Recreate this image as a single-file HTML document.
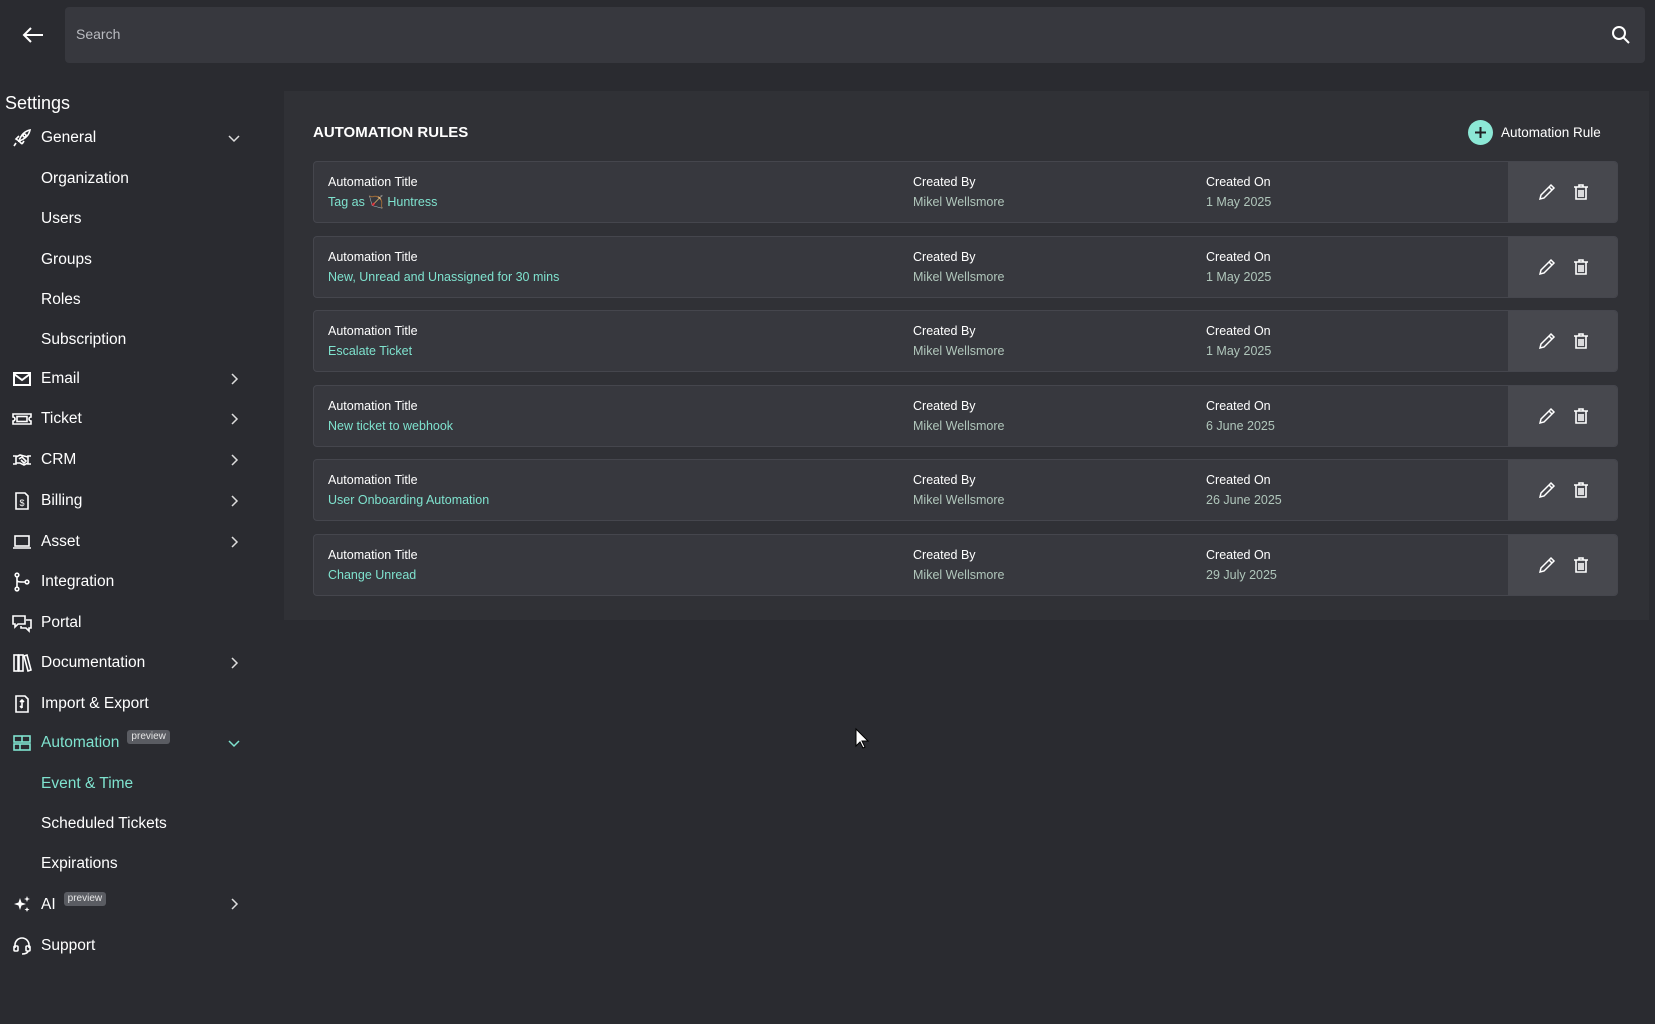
<!DOCTYPE html>
<html><head><meta charset="utf-8"><style>
*{margin:0;padding:0;box-sizing:border-box}
body{width:1655px;height:1024px;background:#2a2b30;font-family:"Liberation Sans",sans-serif;color:#fff;position:relative;overflow:hidden}
.abs{position:absolute}
.search{left:65px;top:7px;width:1580px;height:56px;background:#37383e;border-radius:4px}
.search span{position:absolute;left:11px;top:19px;font-size:14px;color:#b9bbc0}
.sb{position:absolute;left:0;top:2px;width:280px;height:1000px}
.nav{position:absolute;left:41px;font-size:15.5px;color:#fff;line-height:20px}
.ico{position:absolute;left:12px;width:20px;height:20px}
.chev{position:absolute;left:228px;width:12px;height:12px}
.teal{color:#7fe3cf}
.badge{display:inline-block;background:#5a5c62;color:#e6e6e6;font-size:10px;line-height:14px;padding:0 4px;border-radius:3px;vertical-align:top;margin-left:8px;margin-top:-3px}
.panel{left:284px;top:91px;width:1365px;height:529px;background:#303136}
.card{position:absolute;left:313px;width:1305px;height:62px;background:#37383e;border:1px solid #45464d;border-radius:4px;overflow:hidden}
.card .act{position:absolute;right:0;top:0;width:109px;height:100%;background:#47484e}
.card .l{position:absolute;font-size:12.5px;line-height:16px}
.card .h{top:12px;color:#fff}
.card .v{top:32px}
.v1{color:#7fe3cf}.v2{color:#b0c6bb}
</style></head><body>
<svg class="abs" style="left:21px;top:25px" width="24" height="20" viewBox="0 0 24 20"><path d="M22 10H3M10 3L3 10l7 7" stroke="#fff" stroke-width="2" fill="none"/></svg>
<div class="abs search"><span>Search</span>
<svg style="position:absolute;right:14px;top:18px" width="20" height="20" viewBox="0 0 20 20"><circle cx="8" cy="8" r="6" stroke="#fff" stroke-width="2" fill="none"/><path d="M12.5 12.5L18 18" stroke="#fff" stroke-width="2"/></svg></div>

<div class="sb">
<div class="abs" style="left:5px;top:91px;font-size:18px">Settings</div>

<svg class="ico" style="top:126px" viewBox="0 0 20 20" fill="none" stroke="#fff" stroke-width="1.6"><path d="M7 13c2-6 6-10 11-11-1 5-5 9-11 11zM7 13l-3-2 3-3M10 16l-3-3M10 16l2-3"/><circle cx="12.5" cy="7.5" r="1.5"/><path d="M4 15l-2 3"/></svg>
<div class="nav" style="top:126px">General</div>
<svg class="chev" style="top:130px" viewBox="0 0 12 12"><path d="M1 4l5 5 5-5" stroke="#ddd" stroke-width="1.5" fill="none"/></svg>
<div class="nav" style="top:167px">Organization</div>
<div class="nav" style="top:207px">Users</div>
<div class="nav" style="top:248px">Groups</div>
<div class="nav" style="top:288px">Roles</div>
<div class="nav" style="top:328px">Subscription</div>

<svg class="ico" style="top:367px" viewBox="0 0 20 20" fill="none" stroke="#fff" stroke-width="2"><rect x="2" y="4" width="16" height="12"/><path d="M2 5l8 6 8-6"/></svg>
<div class="nav" style="top:367px">Email</div>
<svg class="chev" style="top:371px" viewBox="0 0 12 12"><path d="M4 1l5 5-5 5" stroke="#ddd" stroke-width="1.5" fill="none"/></svg>

<svg class="ico" style="top:407px" viewBox="0 0 20 20" fill="none" stroke="#fff" stroke-width="1.6"><path d="M1 5h18v3a2 2 0 000 4v3H1v-3a2 2 0 000-4z"/><rect x="5" y="7.5" width="10" height="5"/></svg>
<div class="nav" style="top:407px">Ticket</div>
<svg class="chev" style="top:411px" viewBox="0 0 12 12"><path d="M4 1l5 5-5 5" stroke="#ddd" stroke-width="1.5" fill="none"/></svg>

<svg class="ico" style="top:448px" viewBox="0 0 20 20" fill="none" stroke="#fff" stroke-width="1.6"><path d="M1 6h3v8H1M19 6h-3v8h3M4 7l4-2 4 1 4 1M16 13l-4 2-4-2-4 0M7 9l3-2 4 4-2 2-3-3"/></svg>
<div class="nav" style="top:448px">CRM</div>
<svg class="chev" style="top:452px" viewBox="0 0 12 12"><path d="M4 1l5 5-5 5" stroke="#ddd" stroke-width="1.5" fill="none"/></svg>

<svg class="ico" style="top:489px" viewBox="0 0 20 20" fill="none" stroke="#fff" stroke-width="1.6"><path d="M4 2h9l3 3v13H4z"/><text x="10" y="15" font-size="9" fill="#fff" stroke="none" text-anchor="middle" font-family="Liberation Sans">$</text></svg>
<div class="nav" style="top:489px">Billing</div>
<svg class="chev" style="top:493px" viewBox="0 0 12 12"><path d="M4 1l5 5-5 5" stroke="#ddd" stroke-width="1.5" fill="none"/></svg>

<svg class="ico" style="top:530px" viewBox="0 0 20 20" fill="none" stroke="#fff" stroke-width="1.6"><rect x="3" y="4" width="14" height="10"/><path d="M1 16h18"/></svg>
<div class="nav" style="top:530px">Asset</div>
<svg class="chev" style="top:534px" viewBox="0 0 12 12"><path d="M4 1l5 5-5 5" stroke="#ddd" stroke-width="1.5" fill="none"/></svg>

<svg class="ico" style="top:570px" viewBox="0 0 20 20" fill="none" stroke="#fff" stroke-width="1.6"><circle cx="5" cy="3" r="1.8"/><circle cx="5" cy="17" r="1.8"/><circle cx="15" cy="10" r="1.8"/><path d="M5 5v10M5 8c0 2 2 2 8 2"/></svg>
<div class="nav" style="top:570px">Integration</div>

<svg class="ico" style="top:611px" viewBox="0 0 20 20" fill="none" stroke="#fff" stroke-width="1.6"><path d="M1 3h12v8H6l-3 3v-3H1zM14 7h5v8h-2v3l-3-3H9v-2"/></svg>
<div class="nav" style="top:611px">Portal</div>

<svg class="ico" style="top:651px" viewBox="0 0 20 20" fill="none" stroke="#fff" stroke-width="1.6"><rect x="2" y="2" width="4" height="16"/><rect x="7" y="2" width="4" height="16"/><path d="M12 3l3-1 4 15-3 1z"/></svg>
<div class="nav" style="top:651px">Documentation</div>
<svg class="chev" style="top:655px" viewBox="0 0 12 12"><path d="M4 1l5 5-5 5" stroke="#ddd" stroke-width="1.5" fill="none"/></svg>

<svg class="ico" style="top:692px" viewBox="0 0 20 20" fill="none" stroke="#fff" stroke-width="1.6"><path d="M4 2h9l3 3v13H4z"/><path d="M8 8l2-2 2 2M10 6v8M8 12l2 2"/></svg>
<div class="nav" style="top:692px">Import &amp; Export</div>

<svg class="ico" style="top:731px" viewBox="0 0 20 20" fill="none" stroke="#7fe3cf" stroke-width="1.6"><rect x="2" y="3" width="16" height="6"/><rect x="2" y="11" width="16" height="6"/><path d="M10 3v6M8 11v6"/></svg>
<div class="nav teal" style="top:731px">Automation<span class="badge">preview</span></div>
<svg class="chev" style="top:735px" viewBox="0 0 12 12"><path d="M1 4l5 5 5-5" stroke="#7fe3cf" stroke-width="1.5" fill="none"/></svg>
<div class="nav teal" style="top:772px">Event &amp; Time</div>
<div class="nav" style="top:812px">Scheduled Tickets</div>
<div class="nav" style="top:852px">Expirations</div>

<svg class="ico" style="top:892px" viewBox="0 0 20 20" fill="#fff"><path d="M8 4l1.5 4.5L14 10l-4.5 1.5L8 16l-1.5-4.5L2 10l4.5-1.5z"/><path d="M15 2l.8 2.2L18 5l-2.2.8L15 8l-.8-2.2L12 5l2.2-.8zM15 13l.7 1.8 1.8.7-1.8.7-.7 1.8-.7-1.8-1.8-.7 1.8-.7z"/></svg>
<div class="nav" style="top:893px">AI<span class="badge">preview</span></div>
<svg class="chev" style="top:896px" viewBox="0 0 12 12"><path d="M4 1l5 5-5 5" stroke="#ddd" stroke-width="1.5" fill="none"/></svg>

<svg class="ico" style="top:934px" viewBox="0 0 20 20" fill="none" stroke="#fff" stroke-width="1.6"><path d="M3 12V9a7 7 0 0114 0v3"/><rect x="2" y="10" width="4" height="5" rx="1"/><rect x="14" y="10" width="4" height="5" rx="1"/><path d="M16 15c0 2-3 3-6 3"/></svg>
<div class="nav" style="top:934px">Support</div>
</div>

<div class="abs panel"></div>
<div class="abs" style="left:313px;top:124px;font-size:15px;font-weight:bold">AUTOMATION RULES</div>
<div class="abs" style="left:1468px;top:120px;width:25px;height:25px;border-radius:50%;background:#8ce8d6"></div>
<svg class="abs" style="left:1474px;top:126px" width="13" height="13" viewBox="0 0 13 13"><path d="M6.5 1v11M1 6.5h11" stroke="#1f2024" stroke-width="2"/></svg>
<div class="abs" style="left:1501px;top:125px;font-size:13.5px">Automation Rule</div>

<div class="card" style="top:161px"><div class="l h" style="left:14px">Automation Title</div><div class="l v v1" style="left:14px">Tag as 🏹 Huntress</div><div class="l h" style="left:599px">Created By</div><div class="l v v2" style="left:599px">Mikel Wellsmore</div><div class="l h" style="left:892px">Created On</div><div class="l v v2" style="left:892px">1 May 2025</div><div class="act"></div></div>
<div class="card" style="top:236px"><div class="l h" style="left:14px">Automation Title</div><div class="l v v1" style="left:14px">New, Unread and Unassigned for 30 mins</div><div class="l h" style="left:599px">Created By</div><div class="l v v2" style="left:599px">Mikel Wellsmore</div><div class="l h" style="left:892px">Created On</div><div class="l v v2" style="left:892px">1 May 2025</div><div class="act"></div></div>
<div class="card" style="top:310px"><div class="l h" style="left:14px">Automation Title</div><div class="l v v1" style="left:14px">Escalate Ticket</div><div class="l h" style="left:599px">Created By</div><div class="l v v2" style="left:599px">Mikel Wellsmore</div><div class="l h" style="left:892px">Created On</div><div class="l v v2" style="left:892px">1 May 2025</div><div class="act"></div></div>
<div class="card" style="top:385px"><div class="l h" style="left:14px">Automation Title</div><div class="l v v1" style="left:14px">New ticket to webhook</div><div class="l h" style="left:599px">Created By</div><div class="l v v2" style="left:599px">Mikel Wellsmore</div><div class="l h" style="left:892px">Created On</div><div class="l v v2" style="left:892px">6 June 2025</div><div class="act"></div></div>
<div class="card" style="top:459px"><div class="l h" style="left:14px">Automation Title</div><div class="l v v1" style="left:14px">User Onboarding Automation</div><div class="l h" style="left:599px">Created By</div><div class="l v v2" style="left:599px">Mikel Wellsmore</div><div class="l h" style="left:892px">Created On</div><div class="l v v2" style="left:892px">26 June 2025</div><div class="act"></div></div>
<div class="card" style="top:534px"><div class="l h" style="left:14px">Automation Title</div><div class="l v v1" style="left:14px">Change Unread</div><div class="l h" style="left:599px">Created By</div><div class="l v v2" style="left:599px">Mikel Wellsmore</div><div class="l h" style="left:892px">Created On</div><div class="l v v2" style="left:892px">29 July 2025</div><div class="act"></div></div>

<svg class="abs" style="left:0;top:0" width="1655" height="1024">
<defs>
<g id="pen"><path d="M2 16l1-4L13 2l3 3L6 15z M11 4l3 3" stroke="#fff" stroke-width="1.5" fill="none"/></g>
<g id="bin"><path d="M1 4h14M6 4V2h4v2M3 4v12h10V4M6 7v7M8 7v7M10 7v7" stroke="#fff" stroke-width="1.6" fill="none"/></g>
</defs>
<use href="#pen" x="1538" y="183"/><use href="#bin" x="1573" y="183"/>
<use href="#pen" x="1538" y="258"/><use href="#bin" x="1573" y="258"/>
<use href="#pen" x="1538" y="332"/><use href="#bin" x="1573" y="332"/>
<use href="#pen" x="1538" y="407"/><use href="#bin" x="1573" y="407"/>
<use href="#pen" x="1538" y="481"/><use href="#bin" x="1573" y="481"/>
<use href="#pen" x="1538" y="556"/><use href="#bin" x="1573" y="556"/>
<path d="M856 729v17l4-4 3 6 2-1-3-6h6z" fill="#fff" stroke="#000" stroke-width="1"/>
</svg>
</body></html>
